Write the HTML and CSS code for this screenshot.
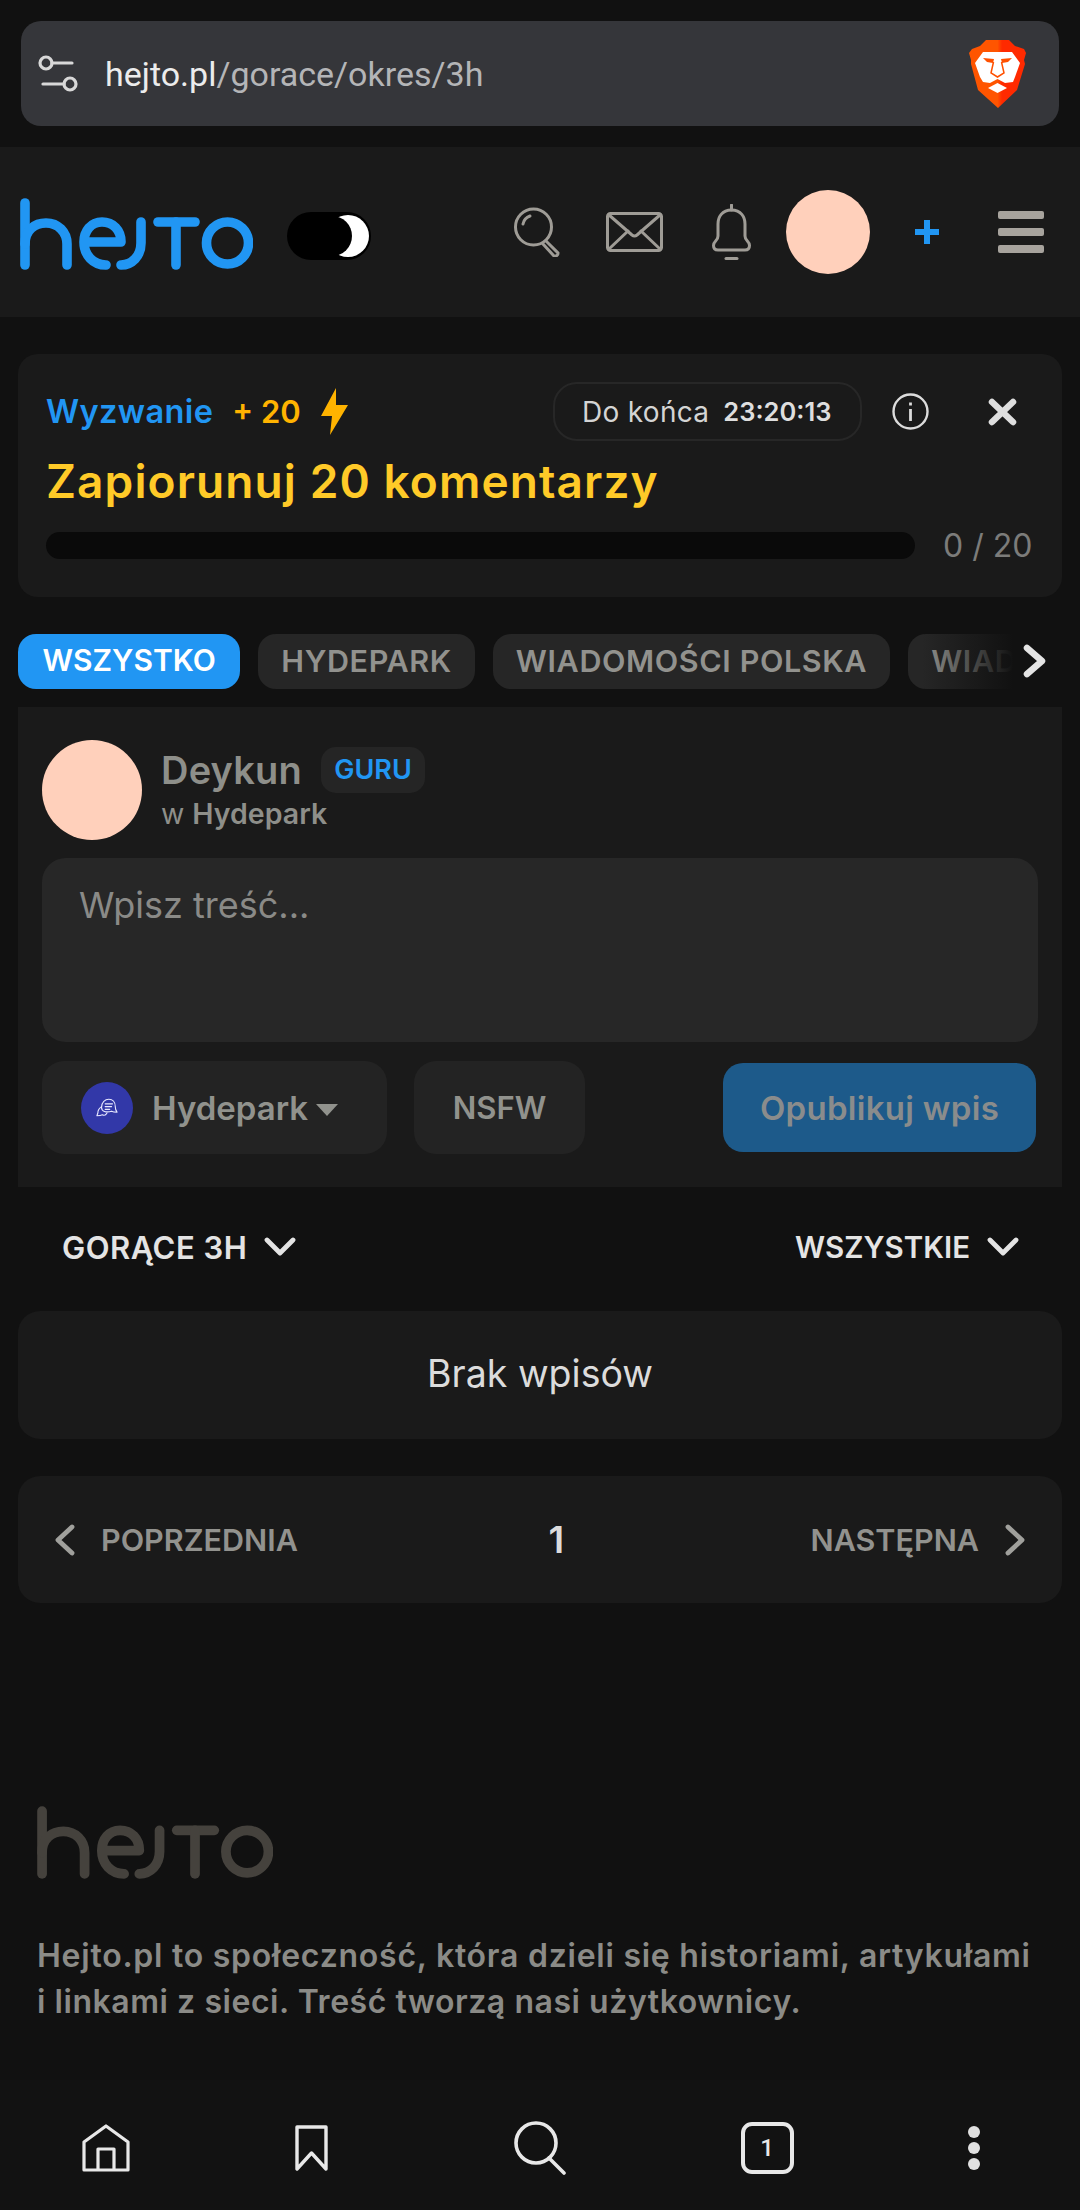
FILE: index.html
```html
<!DOCTYPE html>
<html lang="pl">
<head>
<meta charset="utf-8">
<title>Hejto</title>
<link rel="stylesheet" href="styles.css">
</head>
<body>
<svg class="defs" width="0" height="0" aria-hidden="true">
  <symbol id="logo" viewBox="20 16 233 72">
    <g fill="none" stroke="currentColor" stroke-width="9.6" stroke-linecap="round" stroke-linejoin="round">
      <path d="M25 21V83"/>
      <path d="M25 62C25 48 35 41 46 41C58 41 67 50 67 62V83"/>
      <path d="M84 60H121C121 48 113 40 102 40C91 40 84 49 84 60C84 73 93 83 106 83"/>
      <path d="M141 40V61C141 74 132 83 121 83"/>
      <path d="M158 40H195"/>
      <path d="M176 40V83"/>
      <circle cx="227.500" cy="61" r="21"/>
    </g>
  </symbol>
</svg>

<div class="browser-top">
  <div class="urlbar">
    <svg class="tune" viewBox="0 0 40 38" fill="none" stroke="#d8d8d8" stroke-width="3.200" stroke-linecap="round">
      <circle cx="8" cy="8" r="6"/><path d="M14 8H34"/>
      <circle cx="32" cy="29" r="6"/><path d="M5 29H26"/>
    </svg>
    <div class="url"><span class="url-host">hejto.pl</span>/gorace/okres/3h</div>
    <svg class="brave" viewBox="0 0 57 68">
      <defs><linearGradient id="bg1" x1="0" x2="1" y1="0" y2="0"><stop offset="0.5" stop-color="#ff5500"/><stop offset="0.58" stop-color="#ff2a00"/></linearGradient></defs>
      <path fill="url(#bg1)" d="M17 0H40L46 6L55 9L57 13L55 20L56 24L48 50L29 68L9 50L2 24L2 20L0 13L3 9L11 6Z"/>
      <path fill="#fff" d="M14 12H43L51 23L46 37L44 42L36 43L28.500 39L21 43L14 42L11 37L6 23Z"/>
      <path fill="#ff5000" d="M14 18L25 19L24 23L18 22ZM43 18L32 19L33 23L39 22Z"/>
      <path fill="none" stroke="#ff5000" stroke-width="1.500" d="M24.500 22L22 33L28.500 37L35 33L32.500 22"/>
      <path fill="#fff" d="M19 48L28.500 43L38 48L28.500 53Z"/>
    </svg>
  </div>
</div>

<header class="site-header">
  <svg class="logo"><use href="#logo"/></svg>
  <svg class="toggle" viewBox="0 0 84 48">
    <rect width="84" height="48" rx="24" fill="#000"/>
    <circle cx="61" cy="24" r="21" fill="#fff"/>
    <circle cx="45" cy="24" r="20" fill="#000"/>
  </svg>
  <svg class="hi hi-search" viewBox="0 0 48 50" fill="none" stroke="#9f9c96" stroke-width="3" stroke-linecap="round">
    <circle cx="19.500" cy="20" r="18"/>
    <path d="M9 17C10 12 13 10 16 9"/>
    <path d="M32 34L44 46A3 3 0 0 1 40 49L29 37" />
  </svg>
  <svg class="hi hi-mail" viewBox="0 0 57 40" fill="none" stroke="#9f9c96" stroke-width="3" stroke-linecap="round" stroke-linejoin="round">
    <rect x="1.500" y="1.500" width="54" height="37" rx="3"/>
    <path d="M3 3L26 23Q28.500 25 31 23L54 3"/>
    <path d="M3 37L22 19M54 37L35 19"/>
  </svg>
  <svg class="hi hi-bell" viewBox="0 0 39 56" fill="none" stroke="#9f9c96" stroke-width="3" stroke-linecap="round" stroke-linejoin="round">
    <path d="M19.500 1V6"/>
    <path d="M19.500 6C10 6 6 13 6 20V32C6 37 1.500 37 1.500 41.500C1.500 44 3 46 6 46H33C36 46 37.500 44 37.500 41.500C37.500 37 33 37 33 32V20C33 13 29 6 19.500 6Z"/>
    <path d="M14 54.500H25"/>
  </svg>
  <div class="avatar avatar-small"></div>
  <svg class="hi hi-plus" viewBox="0 0 24 24"><path fill="#2196f3" d="M9 0H15V9H24V15H15V24H9V15H0V9H9Z"/></svg>
  <div class="burger"><span></span><span></span><span></span></div>
</header>

<section class="challenge">
  <div class="ch-top">
    <span class="ch-label">Wyzwanie</span>
    <span class="ch-points">+ 20</span>
    <svg class="bolt" viewBox="0 0 27 47"><path fill="#ffb300" d="M15 0L0 28H11L9 47L27 17H15Z"/></svg>
    <div class="ch-timer"><span class="ch-timer-l">Do końca</span><b class="ch-timer-v">23:20:13</b></div>
    <svg class="ch-info" viewBox="0 0 37 37" fill="none" stroke="#dcdcdc" stroke-width="2.400">
      <circle cx="18.500" cy="18.500" r="17"/>
      <path d="M18.500 16V28" stroke-width="2.800"/><path d="M18.500 9.500V12.500" stroke-width="2.800"/>
    </svg>
    <svg class="ch-close" viewBox="0 0 29 28" fill="none" stroke="#dedede" stroke-width="6.500" stroke-linecap="round">
      <path d="M4 4L25 24M25 4L4 24"/>
    </svg>
  </div>
  <h2 class="ch-title">Zapiorunuj 20 komentarzy</h2>
  <div class="ch-progress">
    <div class="ch-bar"></div>
    <span class="ch-count">0 / 20</span>
  </div>
</section>

<nav class="tabs">
  <a class="tab tab-active">WSZYSTKO</a>
  <a class="tab">HYDEPARK</a>
  <a class="tab">WIADOMOŚCI POLSKA</a>
  <a class="tab">WIADOMOŚCI ŚWIAT</a>
  <div class="tabs-fade"></div>
  <svg class="tabs-next" viewBox="0 0 25 34" fill="none" stroke="#e4e4e4" stroke-width="6.500" stroke-linecap="round" stroke-linejoin="round"><path d="M5 4L20 17L5 30"/></svg>
</nav>

<section class="composer">
  <div class="cp-author">
    <div class="avatar avatar-big"></div>
    <div class="cp-meta">
      <div class="cp-name-row"><span class="cp-name">Deykun</span><span class="cp-rank">GURU</span></div>
      <div class="cp-in">w <b>Hydepark</b></div>
    </div>
  </div>
  <div class="cp-input">Wpisz treść...</div>
  <div class="cp-actions">
    <div class="cp-btn cp-community">
      <span class="cp-com-icon">
        <svg viewBox="0 0 24 22" fill="none" stroke="#e8e8ff" stroke-width="1.200" stroke-linecap="round" stroke-linejoin="round">
          <path d="M6 11C6 5 10 2 14 2C18 2 21 5 21 10C21 12 22 15 23 16C21 16 19 16 17 15C11 17 6 15 6 11Z"/>
          <path d="M6 10C3 12 2 15 2 17L1 20C3 20 5 20 7 19C9 20 11 19 12 17"/>
          <path d="M10 7H18M10 10H17M10 13H15"/>
        </svg>
      </span>
      <span class="cp-com-name">Hydepark</span>
      <span class="cp-caret"></span>
    </div>
    <div class="cp-btn cp-nsfw">NSFW</div>
    <div class="cp-publish">Opublikuj wpis</div>
  </div>
</section>

<div class="sorts">
  <div class="sort sort-hot"><span>GORĄCE 3H</span><svg class="chev-down" viewBox="0 0 32 20" fill="none" stroke="#e4e4e4" stroke-width="4.800" stroke-linecap="round" stroke-linejoin="round"><path d="M3 3L16 16L29 3"/></svg></div>
  <div class="sort"><span>WSZYSTKIE</span><svg class="chev-down" viewBox="0 0 32 20" fill="none" stroke="#e4e4e4" stroke-width="4.800" stroke-linecap="round" stroke-linejoin="round"><path d="M3 3L16 16L29 3"/></svg></div>
</div>

<section class="empty">Brak wpisów</section>

<nav class="pager">
  <div class="pg-side pg-prev"><svg class="chev-side" viewBox="0 0 21 32" fill="none" stroke="#a0a09c" stroke-width="4.800" stroke-linecap="round" stroke-linejoin="round"><path d="M18 3L4 16L18 29"/></svg><span>POPRZEDNIA</span></div>
  <div class="pg-num">1</div>
  <div class="pg-side pg-next"><span>NASTĘPNA</span><svg class="chev-side" viewBox="0 0 21 32" fill="none" stroke="#a0a09c" stroke-width="4.800" stroke-linecap="round" stroke-linejoin="round"><path d="M3 3L17 16L3 29"/></svg></div>
</nav>

<footer class="site-footer">
  <svg class="logo logo-footer"><use href="#logo"/></svg>
  <p class="ft-text">Hejto.pl to społeczność, która dzieli się historiami, artykułami<br><span class="ft-line2">i linkami z sieci. Treść tworzą nasi użytkownicy.</span></p>
</footer>

<nav class="browser-bottom">
  <div class="bb-cell"><svg class="bb-home" viewBox="0 0 48 48" fill="none" stroke="#e8e8e8" stroke-width="3.200" stroke-linejoin="round"><path d="M2 46V18L24 2L46 18V46Z"/><path d="M16 46V25H32V46"/></svg></div>
  <div class="bb-cell"><svg class="bb-mark" viewBox="0 0 33 46" fill="none" stroke="#e8e8e8" stroke-width="3.400" stroke-linejoin="round"><path d="M2 2H31V44L16.500 28L2 44Z"/></svg></div>
  <div class="bb-cell"><svg class="bb-search" viewBox="0 0 52 54" fill="none" stroke="#e8e8e8" stroke-width="3.600" stroke-linecap="round"><circle cx="22" cy="22" r="20"/><path d="M35 37L50 52"/></svg></div>
  <div class="bb-cell"><div class="bb-tabs">1</div></div>
  <div class="bb-cell"><div class="bb-dots"><span></span><span></span><span></span></div></div>
</nav>
</body>
</html>
```

FILE: styles.css
```css
* { box-sizing: border-box; }
html, body { margin: 0; padding: 0; }
body {
  width: 1080px;
  height: 2210px;
  overflow: hidden;
  background: #111111;
  font-family: "Inter", "Noto Sans", sans-serif;
  color: #e0e0e0;
}
.defs { position: absolute; }

/* browser top */
.browser-top { padding: 21px; height: 147px; }
.urlbar {
  height: 105px;
  background: #35363a;
  border-radius: 20px;
  display: flex;
  align-items: center;
  padding: 0 33px 0 17px;
}
.tune { width: 40px; height: 38px; flex: none; }
.url {
  margin-left: 27px;
  font-family: "Roboto", sans-serif;
  font-size: 34px;
  color: #b4b5b7;
}
.url-host { color: #ececec; }
.brave { width: 57px; height: 68px; margin-left: auto; }

/* header */
.site-header {
  height: 170px;
  background: #1a1a1a;
  display: flex;
  align-items: center;
  padding-left: 20px;
}
.logo { width: 233px; height: 72px; color: #2196f3; flex: none; margin-top: 4px; }
.toggle { width: 84px; height: 48px; margin-left: 34px; margin-top: 8px; flex: none; }
.hi { flex: none; }
.hi-search { width: 48px; height: 50px; margin-left: 143px; }
.hi-mail { width: 57px; height: 40px; margin-left: 44px; }
.hi-bell { width: 39px; height: 56px; margin-left: 49px; }
.avatar { border-radius: 50%; background: #ffd0bb; flex: none; }
.avatar-small { width: 84px; height: 84px; margin-left: 35px; }
.hi-plus { width: 24px; height: 24px; margin-left: 45px; }
.burger { width: 46px; margin-left: 59px; display: flex; flex-direction: column; gap: 9px; }
.burger span { display: block; height: 8px; border-radius: 2px; background: #a7a39d; }

/* challenge */
.challenge {
  margin: 37px 18px 0;
  height: 243px;
  background: #1a1a1a;
  border-radius: 20px;
  padding: 28px 28px 0;
}
.ch-top { display: flex; align-items: center; height: 59px; }
.ch-label { font-size: 32.500px; font-weight: 600; color: #2196f3; letter-spacing: 0.4px; }
.ch-points { font-size: 31px; font-weight: 600; color: #ffb300; margin-left: 19px; }
.bolt { width: 27px; height: 47px; margin-left: 20px; flex: none; }
.ch-timer {
  margin-left: auto;
  width: 309px;
  height: 59px;
  border: 2px solid #272727;
  border-radius: 24px;
  display: flex;
  align-items: center;
  padding-left: 27px;
  font-size: 26px;
}
.ch-timer-l { color: #d4d4d4; font-size: 28px; letter-spacing: 0.3px; }
.ch-timer-v { color: #dedede; font-size: 25.500px; font-weight: 600; margin-left: 14px; white-space: nowrap; }
.ch-info { width: 37px; height: 37px; margin-left: 30px; flex: none; }
.ch-close { width: 29px; height: 28px; margin-left: 59px; margin-right: 17px; flex: none; }
.ch-title {
  margin: 10px 0 0;
  height: 60px;
  line-height: 60px;
  font-size: 46px;
  letter-spacing: 1.100px;
  font-weight: 600;
  color: #ffca28;
  white-space: nowrap;
}
.ch-progress { display: flex; align-items: center; margin-top: 21px; height: 27px; }
.ch-bar { width: 869px; height: 27px; border-radius: 14px; background: #0a0a0a; flex: none; }
.ch-count { margin-left: 28px; font-size: 32px; color: #7c7c7a; white-space: nowrap; }

/* tabs */
.tabs {
  position: relative;
  margin: 37px 18px 0;
  height: 55px;
  display: flex;
  gap: 18px;
  overflow: hidden;
}
.tab {
  flex: none;
  height: 55px;
  padding: 0 23px 3px;
  display: flex;
  align-items: center;
  border-radius: 18px;
  background: #262626;
  color: #92928e;
  font-size: 30.500px;
  letter-spacing: 0.600px;
  font-weight: 600;
  white-space: nowrap;
}
.tab-active { background: #2196f3; color: #ffffff; padding: 0 24.500px 3px; font-size: 30px; letter-spacing: 0; }
.tabs-fade {
  position: absolute;
  right: 0;
  top: 0;
  width: 140px;
  height: 55px;
  background: linear-gradient(to right, rgba(17, 17, 17, 0), #111111 65%);
}
.tabs-next { position: absolute; right: 15px; top: 10px; width: 25px; height: 34px; }

/* composer */
.composer {
  margin: 18px 18px 0;
  height: 480px;
  background: #1a1a1a;
  padding: 33px 24px 0;
}
.cp-author { display: flex; align-items: center; height: 100px; }
.avatar-big { width: 100px; height: 100px; }
.cp-meta { margin-left: 19px; }
.cp-name-row { display: flex; align-items: center; height: 46px; margin-top: -3px; }
.cp-name { font-size: 38px; letter-spacing: 0.2px; font-weight: 600; color: #8e8f8a; }
.cp-rank {
  margin-left: 19px;
  width: 104px;
  height: 46px;
  border-radius: 15px;
  background: #252525;
  color: #2196f3;
  font-size: 27px;
  font-weight: 600;
  display: flex;
  align-items: center;
  justify-content: center;
}
.cp-in { font-size: 28.500px; color: #8e8f8a; margin-top: 3px; }
.cp-in b { font-weight: 600; margin-left: 0; }
.cp-input {
  margin-top: 18px;
  height: 184px;
  background: #272727;
  border-radius: 24px;
  padding: 26px 37px;
  font-size: 36px;
  line-height: 42px;
  color: #8a8a87;
}
.cp-actions { display: flex; align-items: center; margin-top: 19px; height: 93px; }
.cp-btn {
  height: 93px;
  background: #232323;
  border-radius: 22px;
  display: flex;
  align-items: center;
  color: #91928d;
  font-size: 31px;
  font-weight: 600;
}
.cp-community { width: 345px; padding-left: 39px; font-size: 33px; }
.cp-com-icon {
  width: 52px;
  height: 52px;
  border-radius: 50%;
  background: #3238a8;
  display: flex;
  align-items: center;
  justify-content: center;
  flex: none;
}
.cp-com-icon svg { width: 22px; height: 21px; }
.cp-com-name { margin-left: 19px; }
.cp-caret {
  margin-left: 8px;
  margin-top: 4px;
  width: 0;
  height: 0;
  border-left: 11px solid transparent;
  border-right: 11px solid transparent;
  border-top: 12px solid #91928d;
}
.cp-nsfw { width: 171px; margin-left: 27px; justify-content: center; }
.cp-publish {
  margin-left: auto;
  margin-right: 2px;
  width: 313px;
  height: 89px;
  border-radius: 20px;
  background: #1d5a8a;
  color: #8a8c8c;
  font-size: 33px;
  letter-spacing: 0.3px;
  font-weight: 600;
  display: flex;
  align-items: center;
  justify-content: center;
}

/* sort row */
.sorts {
  height: 124px;
  padding: 0 61px 4px 62px;
  display: flex;
  align-items: center;
  justify-content: space-between;
}
.sort { display: flex; align-items: center; font-size: 29.500px; font-weight: 600; color: #e4e4e4; }
.sort-hot { font-size: 31px; letter-spacing: 0.5px; }
.chev-down { width: 32px; height: 20px; margin-left: 17px; }

/* cards */
.empty {
  margin: 0 18px;
  height: 128px;
  padding-bottom: 3px;
  background: #1a1a1a;
  border-radius: 22px;
  display: flex;
  align-items: center;
  justify-content: center;
  font-size: 37.500px;
  color: #dcdcdc;
}
.pager {
  margin: 37px 18px 0;
  height: 127px;
  background: #1a1a1a;
  border-radius: 22px;
  padding: 0 36px;
  display: flex;
  align-items: center;
  justify-content: space-between;
}
.pg-side { display: flex; align-items: center; font-size: 30.500px; font-weight: 600; color: #92928e; white-space: nowrap; }
.pg-prev { width: 246px; }
.pg-next { width: 215px; justify-content: flex-end; }
.chev-side { width: 21px; height: 32px; flex: none; }
.pg-prev svg { margin-right: 26px; }
.pg-next svg { margin-left: 26px; }
.pg-num { width: 14px; font-size: 37px; font-weight: 600; color: #dcdcdc; text-align: center; }

/* footer */
.site-footer { padding: 203px 37px 0; height: 477px; }
.logo-footer { display: block; width: 236px; height: 73px; margin: 0; color: #45423d; }
.ft-text {
  margin: 54px 0 0;
  font-size: 32px;
  letter-spacing: 0.750px;
  line-height: 46px;
  font-weight: 600;
  color: #8b8b87;
  white-space: nowrap;
}
.ft-line2 { letter-spacing: 0.550px; }

/* browser bottom */
.browser-bottom {
  position: absolute;
  left: 0;
  top: 2080px;
  width: 1080px;
  height: 130px;
  padding-top: 5px;
  background: #121212;
  display: grid;
  grid-template-columns: 212px 198px 260px 194px 220px;
  align-items: center;
}
.bb-cell { display: flex; justify-content: center; }
.bb-home { width: 48px; height: 48px; }
.bb-mark { width: 33px; height: 46px; }
.bb-search { width: 52px; height: 54px; }
.bb-tabs {
  width: 53px;
  height: 52px;
  border: 4px solid #e8e8e8;
  border-radius: 11px;
  display: flex;
  align-items: center;
  justify-content: center;
  font-family: "Roboto", sans-serif;
  font-size: 24px;
  font-weight: 500;
  color: #e8e8e8;
}
.bb-dots { display: flex; flex-direction: column; gap: 4px; }
.bb-dots span { width: 12px; height: 12px; border-radius: 50%; background: #e0e0e0; }
```
